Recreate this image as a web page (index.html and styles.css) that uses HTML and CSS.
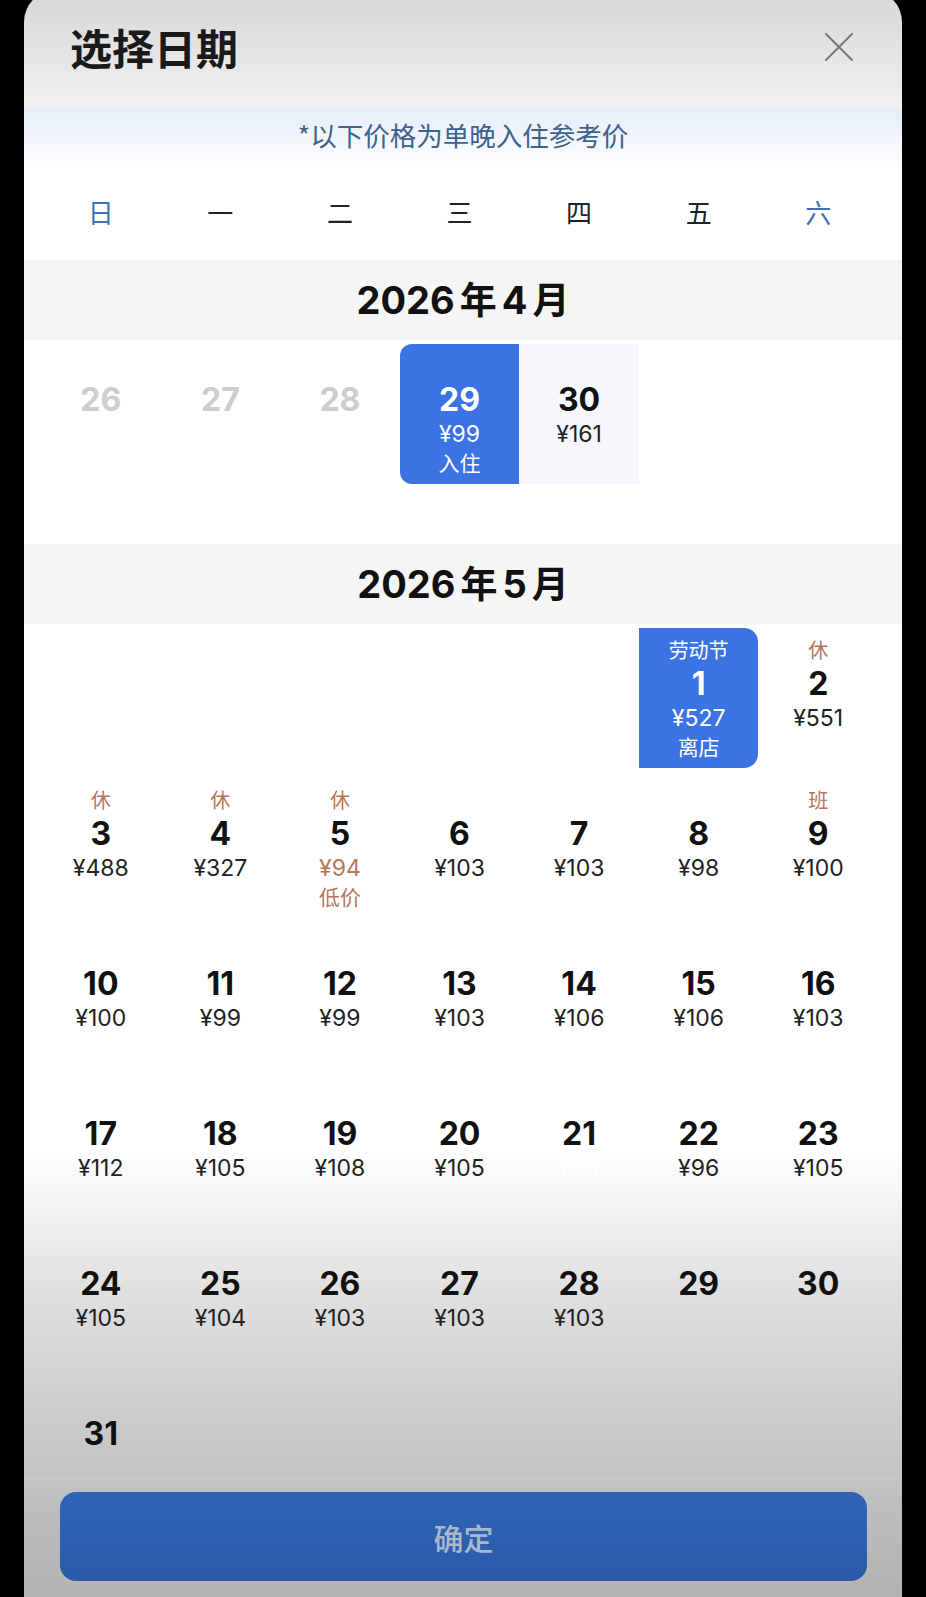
FILE: index.html
```html
<!DOCTYPE html>
<html lang="zh-CN">
<head>
    <meta charset="UTF-8">
    <meta name="viewport" content="width=device-width, initial-scale=1.0">
    <title>选择日期</title>
    <link rel="stylesheet" href="styles.css">
</head>
<body>
    <div class="sheet">
        <div class="sheet-head">
            <h1 class="sheet-title">选择日期</h1>
            <button class="close-btn" aria-label="关闭">
                <svg width="28" height="28" viewBox="0 0 28 28">
                    <path d="M1 1 L27 27 M27 1 L1 27" stroke="#7a7a7a" stroke-width="2" fill="none" stroke-linecap="round"/>
                </svg>
            </button>
        </div>

        <div class="notice">*以下价格为单晚入住参考价</div>

        <div class="week-row">
            <span class="weekend">日</span>
            <span>一</span>
            <span>二</span>
            <span>三</span>
            <span>四</span>
            <span>五</span>
            <span class="weekend">六</span>
        </div>

        <div class="scroll-area">
            <!-- April -->
            <div class="month-title">2026<span class="u">年</span>4<span class="u">月</span></div>
            <div class="month-grid">
                <div class="day past"><span class="tag"></span><span class="num">26</span></div>
                <div class="day past"><span class="tag"></span><span class="num">27</span></div>
                <div class="day past"><span class="tag"></span><span class="num">28</span></div>
                <div class="day selected start">
                    <span class="tag"></span><span class="num">29</span>
                    <span class="price">¥99</span><span class="note">入住</span>
                </div>
                <div class="day in-range">
                    <span class="tag"></span><span class="num">30</span>
                    <span class="price">¥161</span>
                </div>
                <div class="day"></div>
                <div class="day"></div>
            </div>

            <!-- May -->
            <div class="month-title">2026<span class="u">年</span>5<span class="u">月</span></div>
            <div class="month-grid">
                <div class="day"></div>
                <div class="day"></div>
                <div class="day"></div>
                <div class="day"></div>
                <div class="day"></div>
                <div class="day selected end">
                    <span class="tag">劳动节</span><span class="num">1</span>
                    <span class="price">¥527</span><span class="note">离店</span>
                </div>
                <div class="day"><span class="tag holiday">休</span><span class="num">2</span><span class="price">¥551</span></div>

                <div class="day"><span class="tag holiday">休</span><span class="num">3</span><span class="price">¥488</span></div>
                <div class="day"><span class="tag holiday">休</span><span class="num">4</span><span class="price">¥327</span></div>
                <div class="day low">
                    <span class="tag holiday">休</span><span class="num">5</span>
                    <span class="price">¥94</span><span class="note">低价</span>
                </div>
                <div class="day"><span class="tag"></span><span class="num">6</span><span class="price">¥103</span></div>
                <div class="day"><span class="tag"></span><span class="num">7</span><span class="price">¥103</span></div>
                <div class="day"><span class="tag"></span><span class="num">8</span><span class="price">¥98</span></div>
                <div class="day"><span class="tag holiday">班</span><span class="num">9</span><span class="price">¥100</span></div>

                <div class="day"><span class="tag"></span><span class="num">10</span><span class="price">¥100</span></div>
                <div class="day"><span class="tag"></span><span class="num">11</span><span class="price">¥99</span></div>
                <div class="day"><span class="tag"></span><span class="num">12</span><span class="price">¥99</span></div>
                <div class="day"><span class="tag"></span><span class="num">13</span><span class="price">¥103</span></div>
                <div class="day"><span class="tag"></span><span class="num">14</span><span class="price">¥106</span></div>
                <div class="day"><span class="tag"></span><span class="num">15</span><span class="price">¥106</span></div>
                <div class="day"><span class="tag"></span><span class="num">16</span><span class="price">¥103</span></div>

                <div class="day"><span class="tag"></span><span class="num">17</span><span class="price">¥112</span></div>
                <div class="day"><span class="tag"></span><span class="num">18</span><span class="price">¥105</span></div>
                <div class="day"><span class="tag"></span><span class="num">19</span><span class="price">¥108</span></div>
                <div class="day"><span class="tag"></span><span class="num">20</span><span class="price">¥105</span></div>
                <div class="day"><span class="tag"></span><span class="num">21</span><span class="price faded">¥98</span></div>
                <div class="day"><span class="tag"></span><span class="num">22</span><span class="price">¥96</span></div>
                <div class="day"><span class="tag"></span><span class="num">23</span><span class="price">¥105</span></div>

                <div class="day"><span class="tag"></span><span class="num">24</span><span class="price">¥105</span></div>
                <div class="day"><span class="tag"></span><span class="num">25</span><span class="price">¥104</span></div>
                <div class="day"><span class="tag"></span><span class="num">26</span><span class="price">¥103</span></div>
                <div class="day"><span class="tag"></span><span class="num">27</span><span class="price">¥103</span></div>
                <div class="day"><span class="tag"></span><span class="num">28</span><span class="price">¥103</span></div>
                <div class="day"><span class="tag"></span><span class="num">29</span></div>
                <div class="day"><span class="tag"></span><span class="num">30</span></div>

                <div class="day"><span class="tag"></span><span class="num">31</span></div>
            </div>
        </div>

        <div class="sheet-foot">
            <button class="confirm-btn">确定</button>
        </div>
    </div>
</body>
</html>
```

FILE: styles.css
```css
* {
    margin: 0;
    padding: 0;
    box-sizing: border-box;
}

body {
    font-family: Inter, "Noto Sans CJK SC", sans-serif;
    background: #000;
    height: 100vh;
    overflow: hidden;
    color: #1c1c1c;
}

/* bottom sheet, top edge sits just above the viewport */
.sheet {
    margin: -10px 24px 0 24px;
    padding-top: 10px;
    height: calc(100vh + 10px);
    border-radius: 32px 32px 0 0;
    display: flex;
    flex-direction: column;
    overflow: hidden;
    background: linear-gradient(to bottom,
        #d6d6d6 0px,
        #eeeeee 105px,
        #ffffff 180px,
        #ffffff 1160px,
        #e0e0e0 1300px,
        #cacaca 1440px,
        #bdbdbd 1520px,
        #b3b3b3 1607px);
}

.sheet-head {
    height: 94px;
    display: flex;
    align-items: center;
    justify-content: space-between;
    padding: 0 49px 0 46px;
    flex-shrink: 0;
}

.sheet-title {
    font-family: "Noto Sans CJK SC", sans-serif;
    font-size: 42px;
    font-weight: 700;
    line-height: 48px;
    color: #1a1a1a;
}

.close-btn {
    background: none;
    border: none;
    width: 28px;
    height: 28px;
    display: flex;
}

.notice {
    margin-top: 13px;
    height: 61px;
    padding-top: 10px;
    line-height: 35px;
    text-align: center;
    font-family: "Noto Sans CJK SC", sans-serif;
    font-size: 26.5px;
    color: #40618a;
    background: linear-gradient(to bottom, #e5edf8 0%, #f3f7fc 60%, #ffffff 100%);
    flex-shrink: 0;
}

.week-row {
    display: grid;
    grid-template-columns: repeat(7, 1fr);
    padding: 0 24px 6px 17px;
    height: 92px;
    align-items: center;
    text-align: center;
    font-family: "Noto Sans CJK SC", sans-serif;
    font-size: 26px;
    color: #222;
    background: #fff;
    flex-shrink: 0;
}

.week-row .weekend {
    color: #3f6fb8;
}

.scroll-area {
    flex: 1;
    overflow: hidden;
}

.month-title {
    height: 80px;
    line-height: 76px;
    text-align: center;
    font-size: 38px;
    font-weight: 700;
    background: #f5f5f5;
    color: #111;
}

.month-title .u {
    font-family: "Noto Sans CJK SC", sans-serif;
    font-size: 37px;
    margin: 0 5px;
}

.month-title .u:last-child {
    margin-right: 0;
}

.month-grid {
    display: grid;
    grid-template-columns: repeat(7, 1fr);
    row-gap: 10px;
    padding: 4px 24px 60px 17px;
}

.day {
    height: 140px;
    padding-top: 8px;
    display: flex;
    flex-direction: column;
    align-items: center;
    text-align: center;
}

.day .tag {
    height: 28px;
    line-height: 28px;
    font-family: "Noto Sans CJK SC", sans-serif;
    font-size: 20px;
}

.day .num {
    height: 39px;
    line-height: 39px;
    font-size: 32px;
    font-weight: 700;
    color: #111;
}

.day .price {
    height: 30px;
    line-height: 30px;
    font-size: 23px;
    color: #222;
}

.day .note {
    height: 28px;
    line-height: 26px;
    font-family: "Noto Sans CJK SC", sans-serif;
    font-size: 21px;
}

.day .tag.holiday {
    color: #b8735b;
}

.day.past .num {
    color: #cdcdcd;
}

.day.low .price,
.day.low .note {
    color: #b9765a;
}

.day .price.faded {
    color: rgba(255, 255, 255, 0.85);
}

.day.selected {
    background: #3b72e4;
}

.day.selected .tag,
.day.selected .num,
.day.selected .price,
.day.selected .note {
    color: #fff;
}

.day.selected.start {
    border-radius: 12px 0 0 12px;
}

.day.selected.end {
    border-radius: 0 14px 14px 0;
}

.day.in-range {
    background: #f5f7fc;
}

.sheet-foot {
    height: 119px;
    flex-shrink: 0;
    border-top: 1px solid rgba(255, 255, 255, 0.15);
    padding: 13px 35px 0 36px;
}

.confirm-btn {
    width: 100%;
    height: 89px;
    border: none;
    border-radius: 16px;
    background: linear-gradient(to bottom, #3064b8, #2c5aa8);
    color: #a7b8cc;
    font-family: "Noto Sans CJK SC", sans-serif;
    font-size: 30px;
    font-weight: 500;
}
```
